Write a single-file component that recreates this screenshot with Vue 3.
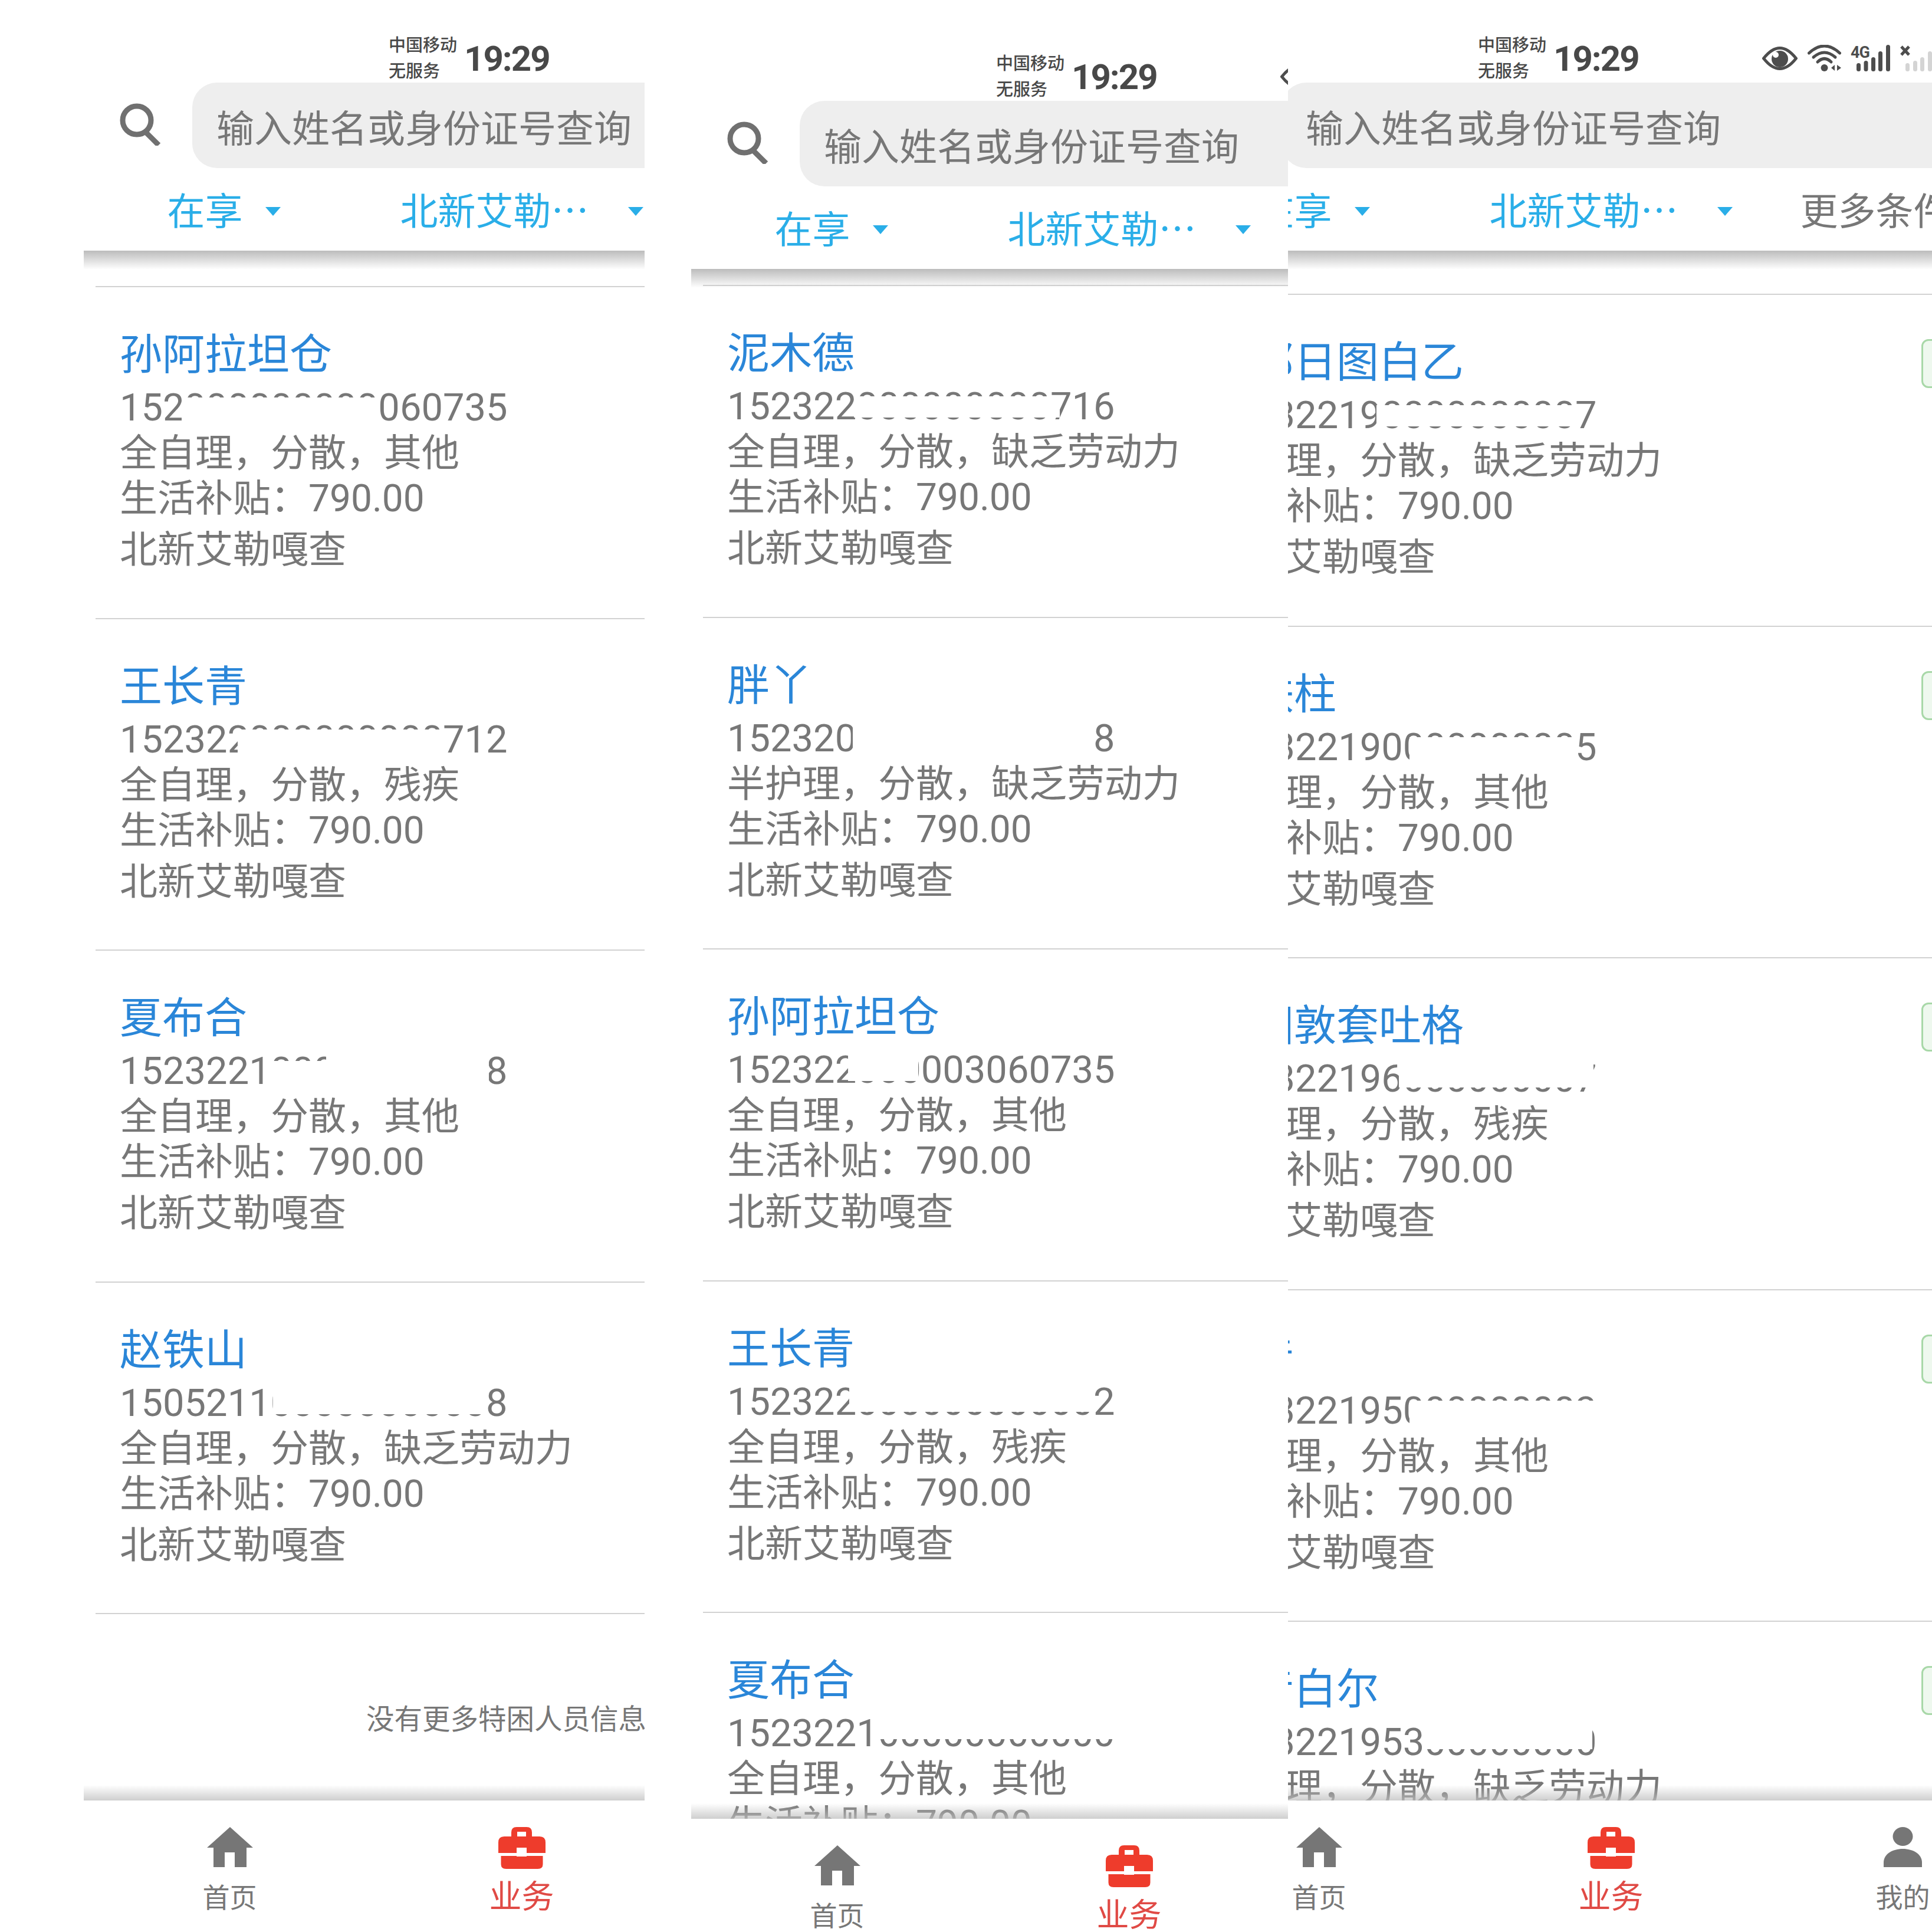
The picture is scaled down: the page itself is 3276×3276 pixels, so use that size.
<script setup>
const comma = "\uFF0C";
const subsidy = "生活补贴\uFF1A790.00";
const village = "北新艾勒嘎查";

// 三张手机截图拼在一起,left/width 是露出来的窗口,originX 是手机相对窗口的偏移
const phones = [
  {
    left: 142,
    width: 951,
    originX: 0,
    originY: 0,
    listTop: 60,
    footer: "没有更多特困人员信息",
    rows: [
      {
        name: "孙阿拉坦仓",
        id: "152000000000060735",
        care: ["全自理", "分散", "其他"],
        masks: [{ x: 105, w: 336, top: 21, h: 60 }],
      },
      {
        name: "王长青",
        id: "152322000000000712",
        care: ["全自理", "分散", "残疾"],
        masks: [{ x: 200, w: 349, top: 21, h: 60 }],
      },
      {
        name: "夏布合",
        id: "152322100000000008",
        care: ["全自理", "分散", "其他"],
        masks: [
          { x: 250, w: 100, top: 21, h: 60 },
          { x: 350, w: 276, top: 0, h: 80 },
        ],
      },
      {
        name: "赵铁山",
        id: "150521100000000008",
        care: ["全自理", "分散", "缺乏劳动力"],
        masks: [{ x: 260, w: 358, top: 0, h: 57 }],
      },
    ],
  },
  {
    left: 1172,
    width: 1012,
    originX: 0,
    originY: 31,
    listTop: 27,
    rows: [
      {
        name: "泥木德",
        id: "152322000000000716",
        care: ["全自理", "分散", "缺乏劳动力"],
        masks: [{ x: 215, w: 349, top: 21, h: 36 }],
      },
      {
        name: "胖丫",
        id: "152320000000000008",
        care: ["半护理", "分散", "缺乏劳动力"],
        masks: [{ x: 213, w: 410, top: 0, h: 80 }],
      },
      {
        name: "孙阿拉坦仓",
        id: "152322000003060735",
        care: ["全自理", "分散", "其他"],
        masks: [{ x: 205, w: 119, top: 0, h: 57 }],
      },
      {
        name: "王长青",
        id: "152322000000000002",
        care: ["全自理", "分散", "残疾"],
        masks: [{ x: 207, w: 412, top: 0, h: 55 }],
      },
      {
        name: "夏布合",
        id: "152322100000000000",
        care: ["全自理", "分散", "其他"],
        masks: [{ x: 250, w: 410, top: 0, h: 48 }],
      },
    ],
  },
  {
    left: 2184,
    width: 1092,
    originX: -195,
    originY: 0,
    listTop: 73,
    badge: true,
    rows: [
      {
        name: "巴那日图白乙",
        id: "152322190000000007",
        care: ["全自理", "分散", "缺乏劳动力"],
        masks: [{ x: 284, w: 336, top: 21, h: 36 }],
      },
      {
        name: "王铁柱",
        id: "152322190000000005",
        care: ["全自理", "分散", "其他"],
        masks: [{ x: 340, w: 282, top: 21, h: 60 }],
      },
      {
        name: "巴图敦套吐格",
        id: "152322196000000007",
        care: ["全自理", "分散", "残疾"],
        masks: [{ x: 322, w: 330, top: 0, h: 53 }],
      },
      {
        name: "白音",
        id: "152322195000000003",
        care: ["全自理", "分散", "其他"],
        masks: [{ x: 340, w: 320, top: 21, h: 60 }],
      },
      {
        name: "宝音白尔",
        id: "152322195300000000",
        care: ["全自理", "分散", "缺乏劳动力"],
        masks: [{ x: 368, w: 282, top: 0, h: 50 }],
      },
    ],
  },
];

function maskStyle(m) {
  return { left: `${m.x}px`, width: `${m.w}px`, top: `${m.top}px`, height: `${m.h}px` };
}
</script>

<template>
  <div class="page">
    <div
      v-for="(p, i) in phones"
      :key="i"
      class="window"
      :style="{ left: `${p.left}px`, width: `${p.width}px` }"
    >
      <div class="phone" :style="{ marginLeft: `${p.originX}px`, marginTop: `${p.originY}px` }">
        <div class="top">
          <div class="status">
            <div class="carrier">
              <div>中国移动</div>
              <div>无服务</div>
            </div>
            <div class="time">19:29</div>
            <svg class="eye" width="60" height="40" viewBox="0 0 60 40">
              <path d="M2.5 20Q30 -15 57.5 20Q30 55 2.5 20Z" fill="none" stroke="#4d4d4d" stroke-width="5" />
              <circle cx="30" cy="21" r="14" fill="#4d4d4d" />
              <circle cx="23" cy="14" r="5" fill="#fff" />
            </svg>
            <svg class="wifi" width="57" height="46" viewBox="0 0 57 46">
              <g fill="none" stroke="#4d4d4d" stroke-width="5" stroke-linecap="round">
                <path d="M2.5 14Q28.5 -10 54.5 14" />
                <path d="M10 21Q28.5 5 47 21" />
                <path d="M17 29Q28.5 18 40 29" />
              </g>
              <circle cx="28.5" cy="39" r="6" fill="#4d4d4d" />
              <path d="M40 39l6 -5v10zM50 34l7 5l-7 5z" fill="#4d4d4d" />
            </svg>
            <svg class="signal" width="67" height="45" viewBox="0 0 67 45">
              <text x="0" y="22" class="net">4G</text>
              <rect x="10" y="31" width="7" height="14" rx="3.5" fill="#4d4d4d" />
              <rect x="22.5" y="27" width="7" height="18" rx="3.5" fill="#4d4d4d" />
              <rect x="35" y="21" width="7" height="24" rx="3.5" fill="#4d4d4d" />
              <rect x="47" y="11" width="7" height="34" rx="3.5" fill="#4d4d4d" />
              <rect x="60" y="0" width="7" height="45" rx="3.5" fill="#4d4d4d" />
            </svg>
            <svg class="sim2" width="66" height="45" viewBox="0 0 66 45">
              <path d="M2 3l13 14M15 3l-13 14" stroke="#4d4d4d" stroke-width="5" fill="none" />
              <rect x="9" y="31" width="7" height="14" rx="3.5" fill="#d4d4d4" />
              <rect x="22" y="27" width="7" height="18" rx="3.5" fill="#d4d4d4" />
              <rect x="34" y="21" width="7" height="24" rx="3.5" fill="#d4d4d4" />
              <rect x="47" y="11" width="7" height="34" rx="3.5" fill="#d4d4d4" />
            </svg>
          </div>

          <div class="search-row">
            <svg class="search-icon" width="72" height="72" viewBox="0 0 72 72">
              <circle cx="31" cy="29" r="24" fill="none" stroke="#707070" stroke-width="9" />
              <path d="M46 49L68 71" stroke="#707070" stroke-width="9" />
            </svg>
            <div class="search-box">输入姓名或身份证号查询</div>
          </div>

          <div class="filters">
            <div class="filter on">
              <span>在享</span>
              <i class="arrow"></i>
            </div>
            <div class="filter on wide">
              <span>北新艾勒<span class="dots">…</span></span>
              <i class="arrow"></i>
            </div>
            <div class="filter more">
              <span>更多条件</span>
            </div>
          </div>
        </div>

        <div class="list">
          <div class="list-inner" :style="{ marginTop: `${p.listTop}px` }">
            <div v-for="r in p.rows" :key="r.name" class="row">
              <div class="name">{{ r.name }}</div>
              <div class="id">
                {{ r.id }}
                <span v-for="(m, k) in r.masks" :key="k" class="mask" :style="maskStyle(m)"></span>
              </div>
              <div class="line">{{ r.care.join(comma) }}</div>
              <div class="line">{{ subsidy }}</div>
              <div class="line last">{{ village }}</div>
              <div v-if="p.badge" class="badge"></div>
            </div>
            <div v-if="p.footer" class="footer">{{ p.footer }}</div>
          </div>
        </div>

        <div class="tabbar">
          <div class="tab">
            <svg width="78" height="68" viewBox="0 0 78 68">
              <path
                d="M39 0L78 35L67 35L67 68L47 68L47 43L30 43L30 68L11 68L11 35L0 35Z"
                fill="#767676"
              />
            </svg>
            <span class="tab-label">首页</span>
          </div>
          <div class="tab active">
            <svg width="80" height="71" viewBox="0 0 80 71">
              <path
                d="M22 16V9Q22 0 31 0H48Q57 0 57 9V16H70Q80 16 80 26V44H0V26Q0 16 10 16ZM32 16H47V8H32Z"
                fill="#ee3c2c"
                fill-rule="evenodd"
              />
              <path d="M4.5 49H75.5V63Q75.5 71 67 71H13Q4.5 71 4.5 63Z" fill="#ee3c2c" />
              <rect x="31" y="35" width="17" height="15" fill="#fff" />
            </svg>
            <span class="tab-label">业务</span>
          </div>
          <div class="tab">
            <svg width="65" height="68" viewBox="0 0 65 68">
              <ellipse cx="32.5" cy="16" rx="17" ry="16" fill="#767676" />
              <path d="M0 68V60C0 46 15 37 32.5 37C50 37 65 46 65 60V68Z" fill="#767676" />
            </svg>
            <span class="tab-label">我的</span>
          </div>
        </div>
      </div>
    </div>
  </div>
</template>

<style scoped>
.page {
  position: relative;
  width: 3276px;
  height: 3276px;
  overflow: hidden;
  background: #fff;
  font-family: Roboto, "Noto Sans CJK SC", sans-serif;
}

.window {
  position: absolute;
  top: 0;
  height: 3276px;
  overflow: hidden;
  background: #fff;
}

.phone {
  display: flex;
  flex-direction: column;
  width: 1485px;
  height: 3276px;
}

.top {
  position: relative;
  z-index: 2;
  flex: none;
  height: 425px;
  background: #fff;
}

.top::after {
  content: "";
  position: absolute;
  left: 0;
  right: 0;
  top: 100%;
  height: 32px;
  background: linear-gradient(#bcbcbc, rgba(255, 255, 255, 0));
}

.status {
  display: flex;
  align-items: flex-start;
  height: 140px;
  padding-left: 517px;
  box-sizing: border-box;
  color: #484848;
}

.carrier {
  width: 128px;
  padding-top: 55px;
  font-size: 29px;
  line-height: 44px;
  font-weight: 500;
}

.time {
  padding-top: 65px;
  font-size: 60px;
  line-height: 70px;
  font-weight: 700;
  letter-spacing: -2px;
}

.eye {
  margin: 79px 0 0 209px;
}

.wifi {
  margin: 76px 0 0 17px;
}

.signal {
  margin: 76px 0 0 16px;
}

.sim2 {
  margin: 76px 0 0 17px;
}

.net {
  font-size: 27px;
  font-weight: 700;
  fill: #4d4d4d;
  letter-spacing: -1px;
}

.search-row {
  display: flex;
  align-items: center;
  height: 145px;
  padding-left: 59px;
}

.search-icon {
  flex: none;
  margin-top: -4px;
}

.search-box {
  flex: 1;
  height: 145px;
  margin: 0 0 0 53px;
  padding-left: 41px;
  border-radius: 42px;
  background: #eeeeee;
  color: #777;
  font-size: 64px;
  line-height: 160px;
}

.filters {
  display: grid;
  grid-template-columns: repeat(3, 495px);
  height: 140px;
}

.filter {
  display: flex;
  align-items: center;
  justify-content: center;
  padding-bottom: 5px;
  font-size: 64px;
  color: #777;
}

.filter.on {
  color: #2aaee8;
  gap: 38px;
  padding-right: 20px;
}

.filter.wide {
  gap: 66px;
  padding-right: 0;
}

.filter.more {
  padding-right: 92px;
}

.dots {
  font-family: "Noto Sans CJK SC", sans-serif;
}

.arrow {
  width: 0;
  height: 0;
  margin-top: 12px;
  border-left: 13px solid transparent;
  border-right: 13px solid transparent;
  border-top: 15px solid #2aaee8;
}

.list {
  flex: 1;
  min-height: 0;
  overflow: hidden;
}

.row {
  position: relative;
  height: 562.5px;
  margin-left: 20px;
  padding: 70px 0 0 41px;
  box-sizing: border-box;
  border-top: 2px solid #d2d2d2;
  color: #777;
}

.name {
  font-size: 72px;
  line-height: 90px;
  color: #2a86d8;
  white-space: nowrap;
}

.id {
  position: relative;
  margin-top: 6px;
  font-size: 65px;
  line-height: 77px;
  white-space: nowrap;
}

.mask {
  position: absolute;
  background: #fff;
}

.line {
  font-size: 64px;
  line-height: 77px;
  white-space: nowrap;
}

.line.last {
  padding-top: 4px;
  line-height: 90px;
}

.badge {
  position: absolute;
  left: 1249px;
  top: 75px;
  width: 160px;
  height: 83px;
  box-sizing: border-box;
  border: 3px solid #a8d8a8;
  border-radius: 12px;
  background: #eef8ee;
}

.footer {
  margin-left: 20px;
  padding: 155px 0 0 459px;
  border-top: 2px solid #d2d2d2;
  font-size: 47.5px;
  line-height: 48px;
  color: #777;
  white-space: nowrap;
}

.tabbar {
  position: relative;
  z-index: 2;
  flex: none;
  display: grid;
  grid-template-columns: repeat(3, 495px);
  height: 223px;
  background: #fff;
}

.tabbar::before {
  content: "";
  position: absolute;
  left: 0;
  right: 0;
  bottom: 100%;
  height: 26px;
  background: linear-gradient(rgba(255, 255, 255, 0), rgba(190, 190, 190, 0.75));
}

.tab {
  display: flex;
  flex-direction: column;
  align-items: center;
  padding-top: 45px;
  color: #777;
}

.tab-label {
  margin-top: 22px;
  font-size: 46px;
  line-height: 60px;
}

.tab.active {
  color: #e04a45;
}

.tab.active .tab-label {
  margin-top: 17px;
  font-size: 55px;
}
</style>
